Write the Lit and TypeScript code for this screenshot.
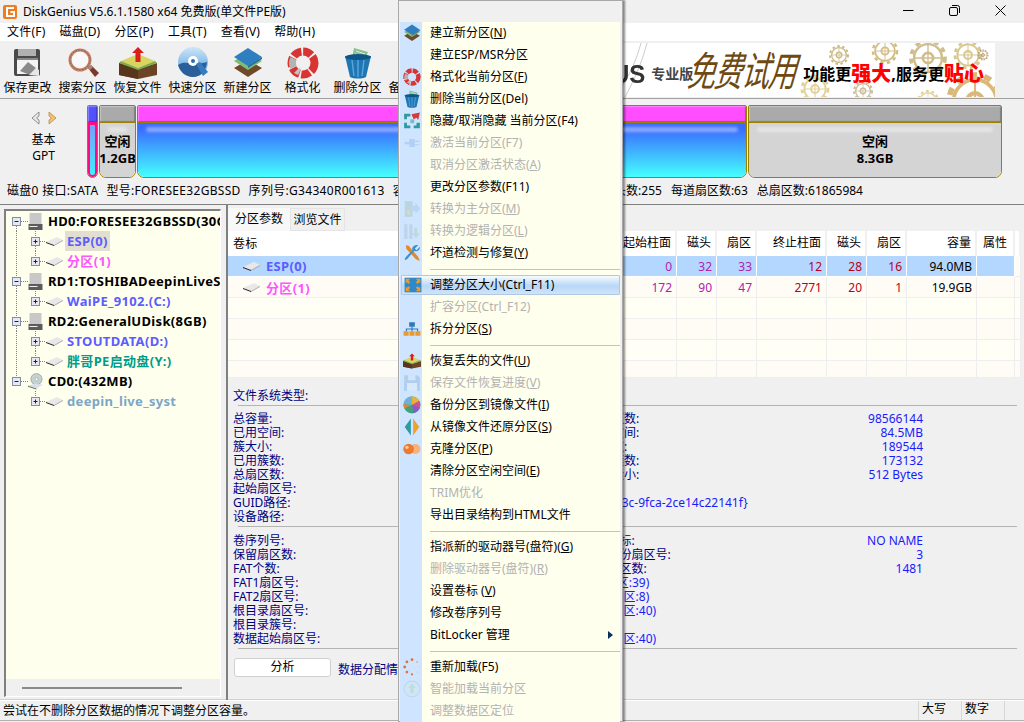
import { LitElement, html, css, svg } from 'lit';
import { customElement } from 'lit/decorators.js';

const ICONS: Record<string, unknown> = {
  save: svg`<rect x="2" y="2" width="26" height="27" rx="2" fill="#4a4a4a"/><rect x="6" y="2" width="18" height="7" fill="#b0b0b0"/><rect x="5" y="11" width="21" height="16" fill="#f4f4f4"/><rect x="5" y="11" width="21" height="2" fill="#888"/><path d="M8 24l8-9 8 6-6 7z" fill="#8a8a8a"/><path d="M17 28l7-7 3 2v6z" fill="#e6e6e6"/>`,
  search: svg`<circle cx="13" cy="13" r="10" fill="#fff" fill-opacity=".5" stroke="#c08268" stroke-width="3"/><circle cx="13" cy="13" r="10" fill="none" stroke="#8f5a44" stroke-width="1" stroke-dasharray="1.5 1.5"/><path d="M21 21l3-3 8 8-4 4z" fill="#7a3a28"/><path d="M21 21l3-3 2 2-3 3z" fill="#a88"/>`,
  recover: svg`<path d="M-3 16L16 22 35 16V28L16 32-3 28z" fill="#6b4426"/><path d="M-3 16L16 22V32L-3 28z" fill="#57361c"/><path d="M-1 14L16 7 33 14 16 21z" fill="#d9d560"/><path d="M-3 16L16 23 35 16 33 14 16 21-1 14z" fill="#7cae4a"/><path d="M16 0l6 6h-3.500v9h-5V6H10z" fill="#d81e1e"/>`,
  quick: svg`<circle cx="16" cy="15" r="15" fill="url(#qk)"/><path d="M1 18c8-6 14 2 29-3-1 9-7 15-14 15C9 30 3 25 1 18z" fill="#2a5f9a"/><circle cx="16" cy="14" r="5" fill="#fff"/><circle cx="16" cy="14" r="2" fill="#2a6fb0"/><path d="M19 17l4-2 8 10-5 4z" fill="#3a7abf"/><defs><linearGradient id="qk" x1="0" y1="0" x2="0" y2="1"><stop offset="0" stop-color="#cfe6f7"/><stop offset="1" stop-color="#4e9ade"/></linearGradient></defs>`,
  new: svg`<path d="M2 21l14-8 14 8-14 9z" fill="#6e4a2a"/><path d="M2 14l14-8 14 8-14 9z" fill="#7fbb74"/><path d="M2 10L16 1l14 9-14 9z" fill="#2f7fc0"/><path d="M16 19l14-9v2l-14 9z" fill="#226aa5"/>`,
  format: svg`<circle cx="16" cy="16" r="11.500" fill="none" stroke="#d83434" stroke-width="8" stroke-dasharray="9 1.800"/><path d="M3.500 22a13.800 13.800 0 0 1 0-12l6 3a7 7 0 0 0 0 6z" fill="#b4b4b4"/><path d="M7 26l5-5 2 1-3 6z" fill="#c4c4c4"/>`,
  del: svg`<path d="M12 1l14 4-4 9-12-2z" fill="#86c08c"/><path d="M14 4l9 3M13 7l8 2" stroke="#dfeedd" stroke-width="1"/><path d="M3 9c8 3 18 3 26 0l-5 21c-4 2-12 2-16 0z" fill="#1f76b4"/><ellipse cx="16" cy="10" rx="13" ry="3" fill="#0f5688"/><path d="M10 13l2 16M16 13v17M22 13l-2 16" stroke="#5aa4d8" stroke-width="1.500"/>`,
  hide: svg`<path d="M2 3h11v5H7v5H2zM2 19h5v5h6v5H2zM19 24h5v-5h6v10H19z" fill="#2f9aa0"/><path d="M13 13h7v7h-7z" fill="#7fb8c8"/><path d="M15 4L30 1l-3 13-3-4-5 3z" fill="#d63a3a"/>`,
  plug: svg`<path d="M3 14h8v4H3zM11 9h10v14H11zM21 12h8v2h-8zM21 18h8v2h-8z" fill="#8fb8e6"/>`,
  primary: svg`<path d="M3 2h14v28H3z" fill="#9ec4b8"/><path d="M17 10h5V5l9 10-9 10v-5h-5z" fill="#9fc7ea"/><path d="M5 22l8-6v12z" fill="#e6c49a"/>`,
  logical: svg`<path d="M2 4h6v26H2zM11 4h6v26h-6z" fill="#a5c2d6"/><path d="M20 10h5v10h5l-7 9-7-9h4z" fill="#a8cdb0"/>`,
  tools: svg`<path d="M5 2l5 1 17 20 3 7-7-3L6 9z" fill="#e08a2a"/><path d="M27 2l-6 6 3 3 6-6c1 6-6 10-10 7L8 26l-4 3-1-3 3-4 11-11c-3-4 3-11 10-9z" fill="#3f8fcf"/>`,
  resize: svg`<rect x="1" y="3" width="30" height="26" fill="#2f88c8"/><path d="M3 5h8l-3 3 3 3-3 3-3-3-2 2zM29 5h-8l3 3-3 3 3 3 3-3 2 2zM3 27h8l-3-3 3-3-3-3-3 3-2-2zM29 27h-8l3-3-3-3 3-3 3 3 2-2z" fill="#ef9a2e"/>`,
  split: svg`<rect x="11" y="4" width="10" height="8" fill="#2f78b8"/><path d="M16 12v4M6 20v-4h20v4M16 16v4" stroke="#2f78b8" stroke-width="2" fill="none"/><rect x="1" y="20" width="9" height="8" fill="#e89a2e"/><rect x="11.500" y="20" width="9" height="8" fill="#e89a2e"/><rect x="22" y="20" width="9" height="8" fill="#e89a2e"/>`,
  floppy: svg`<path d="M2 2h24l4 4v24H2z" fill="#8fb4dc"/><rect x="9" y="2" width="13" height="9" fill="#d8e6f4"/><rect x="7" y="16" width="18" height="14" fill="#e4eef8"/>`,
  pie: svg`<circle cx="16" cy="16" r="15" fill="#3ea27a"/><path d="M16 16V1a15 15 0 0 1 13 8z" fill="#e8b23a"/><path d="M16 16l13-7a15 15 0 0 1 1 12z" fill="#d84a9a"/><path d="M16 16l14 5a15 15 0 0 1-11 9z" fill="#8a5ac8"/><path d="M16 16L2 22A15 15 0 0 1 1 14z" fill="#e8803a"/><path d="M16 16L1 14A15 15 0 0 1 16 1z" fill="#6ab4d8"/>`,
  restore: svg`<path d="M14 1v30L3 16z" fill="#2f9aa0"/><path d="M18 1v30l11-15z" fill="#efa02e"/>`,
  clone: svg`<circle cx="22" cy="16" r="9" fill="#f6b27a"/><circle cx="10" cy="16" r="9.500" fill="#ee7a2e"/><circle cx="7" cy="13" r="3" fill="#fbd0a8"/>`,
  reload: svg`<g fill="#e2703a"><circle cx="16" cy="3" r="2.500"/><circle cx="25" cy="7" r="1.500" fill="#e8a080"/><circle cx="29" cy="16" r="1.200" fill="#f0c0a8"/><circle cx="25" cy="25" r="1.200" fill="#f0c0a8"/><circle cx="16" cy="29" r="2"/><circle cx="7" cy="25" r="2.500"/><circle cx="3" cy="16" r="2.500"/><circle cx="7" cy="7" r="2.500"/></g>`,
  smart: svg`<circle cx="16" cy="16" r="14" fill="#d6e6ee" stroke="#a8c8e0" stroke-width="2"/><path d="M16 6l7 8h-4v9h-6v-9H9z" fill="#a8d8b0"/>`,
};

const icon = (name: string, box = '0 0 32 32') =>
  html`<svg class="ic" viewBox=${box}>${ICONS[name]}</svg>`;

const partIcon = html`<svg class="part" viewBox="0 0 17 9"><path d="M0 5L11 0l6 3-9 5z" fill="#e8e8e8"/><path d="M0 5l8 3v1L0 6z" fill="#222"/><path d="M8 8l9-5v1L8 9z" fill="#aaa"/></svg>`;

const diskIcon = html`<svg class="disk" viewBox="0 0 14 17"><path d="M1 0h12v11H1z" fill="#c8c8c8"/><path d="M0 11h14v6H0z" fill="#5c5c5c"/><path d="M1 13h8v1H1z" fill="#eee"/></svg>`;

const cdIcon = html`<svg class="disk" viewBox="0 0 16 17"><circle cx="9" cy="6" r="6" fill="#c4d2d0" stroke="#7a8a88" stroke-width=".6"/><circle cx="9" cy="6" r="1.600" fill="#fff" stroke="#888" stroke-width=".5"/><path d="M0 13l7-2 9 1-7 4z" fill="#dde"/><path d="M0 13l9 3v1l-9-3z" fill="#4a7a50"/></svg>`;

const gear = (x: number, y: number, r: number, c: string) => svg`
  <circle cx=${x} cy=${y} r=${r} fill="none" stroke=${c} stroke-width=${r * 0.22} stroke-dasharray="${r * 0.28} ${r * 0.28}"/>
  <circle cx=${x} cy=${y} r=${r * 0.82} fill="none" stroke=${c} stroke-width=${r * 0.14}/>
  <circle cx=${x} cy=${y} r=${r * 0.3} fill="none" stroke=${c} stroke-width=${r * 0.16}/>
  <path d="M${x - r * 0.8} ${y}H${x + r * 0.8}M${x} ${y - r * 0.8}V${y + r * 0.8}" stroke=${c} stroke-width=${r * 0.08}/>`;

const TOOLS = [
  ['save', '保存更改'],
  ['search', '搜索分区'],
  ['recover', '恢复文件'],
  ['quick', '快速分区'],
  ['new', '新建分区'],
  ['format', '格式化'],
  ['del', '删除分区'],
  ['floppy', '备份分区'],
];

const MENUS = ['文件(F)', '磁盘(D)', '分区(P)', '工具(T)', '查看(V)', '帮助(H)'];

interface MenuItem { t?: string; i?: string; off?: boolean; sel?: boolean; more?: boolean }

// & marks the accelerator letter
const ITEMS: MenuItem[] = [
  { t: '建立新分区(&N)', i: 'new' },
  { t: '建立ESP/MSR分区' },
  { t: '格式化当前分区(&F)', i: 'format' },
  { t: '删除当前分区(Del)', i: 'del' },
  { t: '隐藏/取消隐藏 当前分区(F4)', i: 'hide' },
  { t: '激活当前分区(F7)', i: 'plug', off: true },
  { t: '取消分区激活状态(&A)', off: true },
  { t: '更改分区参数(F11)' },
  { t: '转换为主分区(&M)', i: 'primary', off: true },
  { t: '转换为逻辑分区(&L)', i: 'logical', off: true },
  { t: '坏道检测与修复(&Y)', i: 'tools' },
  {},
  { t: '调整分区大小(Ctrl_F11)', i: 'resize', sel: true },
  { t: '扩容分区(Ctrl_F12)', off: true },
  { t: '拆分分区(&S)', i: 'split' },
  {},
  { t: '恢复丢失的文件(&U)', i: 'recover' },
  { t: '保存文件恢复进度(&V)', i: 'floppy', off: true },
  { t: '备份分区到镜像文件(&I)', i: 'pie' },
  { t: '从镜像文件还原分区(&S)', i: 'restore' },
  { t: '克隆分区(&P)', i: 'clone' },
  { t: '清除分区空闲空间(&E)' },
  { t: 'TRIM优化', off: true },
  { t: '导出目录结构到HTML文件' },
  {},
  { t: '指派新的驱动器号(盘符)(&G)' },
  { t: '删除驱动器号(盘符)(&R)', off: true },
  { t: '设置卷标 (&V)' },
  { t: '修改卷序列号' },
  { t: 'BitLocker 管理', more: true },
  {},
  { t: '重新加载(F5)', i: 'reload' },
  { t: '智能加载当前分区', i: 'smart', off: true },
  { t: '调整数据区定位', off: true },
];

const TREE = [
  { root: true, disk: 'hd', t: 'HD0:FORESEE32GBSSD(30GB)' },
  { t: 'ESP(0)', c: '#5c5cff', sel: true, more: true },
  { t: '分区(1)', c: '#ff55ff' },
  { root: true, disk: 'hd', t: 'RD1:TOSHIBADeepinLiveSystem(16GB)' },
  { t: 'WaiPE_9102.(C:)', c: '#5c5cff' },
  { root: true, disk: 'hd', t: 'RD2:GeneralUDisk(8GB)' },
  { t: 'STOUTDATA(D:)', c: '#5c5cff', more: true },
  { t: '胖哥PE启动盘(Y:)', c: '#009c8c' },
  { root: true, disk: 'cd', t: 'CD0:(432MB)', last: true },
  { t: 'deepin_live_syst', c: '#7ba6c6', last: true },
];

const COLS = ['起始柱面', '磁头', '扇区', '终止柱面', '磁头', '扇区', '容量', '属性'];
const ROWS = [
  { icon: true, name: 'ESP(0)', c: '#5c5cff', sel: true, v: ['0', '32', '33', '12', '28', '16', '94.0MB', ''] },
  { icon: true, name: '分区(1)', c: '#ff55ff', v: ['172', '90', '47', '2771', '20', '1', '19.9GB', ''] },
  { v: [] }, { v: [] }, { v: [] }, { v: [] },
];

const colClass = (i: number) => (i < 3 ? 'start' : i < 6 ? 'end' : '');

type Info = [string, string?, string?, string?];
const SEC1: Info[] = [
  ['总容量:', undefined, '总扇区数:', '98566144'],
  ['已用空间:', undefined, '空闲空间:', '84.5MB'],
  ['簇大小:', undefined, '总簇数:', '189544'],
  ['已用簇数:', undefined, '空闲簇数:', '173132'],
  ['总扇区数:', undefined, '扇区大小:', '512 Bytes'],
  ['起始扇区号:', '206848'],
  ['GUID路径:', '{5d3c9a70-2f1e-4a3c-9fca-2ce14c22141f}'],
  ['设备路径:', '\\Device\\Harddisk2'],
];
const SEC2: Info[] = [
  ['卷序列号:', undefined, 'FAT卷标:', 'NO NAME'],
  ['保留扇区数:', undefined, 'FAT备份扇区号:', '3'],
  ['FAT个数:', undefined, 'FAT扇区数:', '1481'],
  ['FAT1扇区号:', '34 (柱面:0 磁头:33 扇区:39)'],
  ['FAT2扇区号:', '515 (柱面:0 磁头:89 扇区:8)'],
  ['根目录扇区号:', '996 (柱面:0 磁头:15 扇区:40)'],
  ['根目录簇号:', '2'],
  ['数据起始扇区号:', '996 (柱面:0 磁头:15 扇区:40)'],
];

@customElement('app-root')
export class AppRoot extends LitElement {
  static styles = css`
    :host {
      display: block;
      position: relative;
      width: 1024px;
      height: 722px;
      overflow: hidden;
      background: #f0f0f0;
      color: #000;
      font: 12px/16px "Noto Sans", "Noto Sans CJK SC", sans-serif;
    }
    .ic { width: 32px; height: 32px; overflow: visible; display: block; }

    .title { display: flex; align-items: center; height: 23px; padding-left: 3px; gap: 6px; }
    .title .logo { width: 14px; height: 14px; }
    .title .name { flex: 1; }
    .win { display: flex; padding-right: 18px; gap: 35px; margin-top: -2px; }
    .win svg { width: 11px; height: 11px; display: block; }

    .menubar { display: flex; height: 18px; background: #fff; align-items: center; padding-left: 7px; gap: 14px; letter-spacing: .2px; }

    .toolbar { display: flex; height: 57px; border-bottom: 1px solid #a0a0a0; position: relative; }
    .tool { width: 55px; flex: none; display: flex; flex-direction: column; align-items: center; padding-top: 6px; }
    .tool span { margin-top: 1px; white-space: nowrap; }
    .banner {
      position: absolute;
      left: 623px;
      top: 2px;
      width: 372px;
      height: 54px;
      box-sizing: border-box;
      padding-top: 7px;
      background: #fff;
      display: flex;
      align-items: center;
      overflow: hidden;
      font-weight: 700;
      white-space: nowrap;
    }
    .banner .bg { position: absolute; inset: 0; width: 100%; height: 100%; }
    .banner > span { position: relative; }
    .us { font: 700 24px "Liberation Sans", sans-serif; color: #333; margin-left: -11px; transform: scaleY(1.1); }
    .pro { font-size: 14px; color: #444; margin-left: 6px; width: 44px; }
    .free {
      font-size: 28px;
      font-weight: 400;
      color: #6e4a12;
      width: 107px;
      margin: -7px 0 0 -4px;
      letter-spacing: -1px;
      transform: skewX(-16deg) scaleY(1.45);
    }
    .slogan { font-size: 16px; display: flex; align-items: center; margin-left: 5px; }
    .slogan b { color: #f00; font-size: 20px; }

    .diskbar { display: flex; height: 81px; }
    .nav { width: 87px; flex: none; display: flex; flex-direction: column; align-items: center; padding-top: 12px; }
    .nav svg { width: 26px; height: 14px; margin-bottom: 7px; }
    .segs { display: flex; padding-top: 6px; gap: 1px; height: 72px; }
    .seg {
      display: flex;
      flex-direction: column;
      box-sizing: border-box;
      height: 73px;
      border: 1px solid #9a8000;
      border-radius: 2px 2px 7px 7px;
      overflow: hidden;
      font-weight: 700;
      font-size: 13px;
    }
    .seg .top { height: 16px; flex: none; border-bottom: 1px solid #9a8000; box-shadow: inset -1px -1px 1px rgba(0,0,0,.25), inset 1px 1px 1px rgba(255,255,255,.3); }
    .seg .low { flex: 1; position: relative; display: flex; flex-direction: column; align-items: center; justify-content: center; line-height: 17px; white-space: nowrap; }
    .seg .low::before { content: ''; position: absolute; left: 8px; right: 8px; top: 4px; height: 5px; background: rgba(255,255,255,.4); border-radius: 3px; filter: blur(1.5px); }
    .seg.free1 .low, .seg.free2 .low { background: #d4d4d4; }
    .seg.free1 .top, .seg.free2 .top { background: #aaa; }
    .seg.esp { width: 11px; }
    .seg.esp .top { background: #5252ff; }
    .seg.esp .low { border: 3px solid #ff0a80; border-radius: 0 0 5px 5px; background: linear-gradient(#7a9dfa, #3cf0ff); margin: -1px; }
    .seg.esp .low::before { display: none; }
    .seg.free1 { width: 37px; }
    .seg.wide { width: 610px; }
    .seg.wide .top { background: #ff4dff; }
    .seg.wide .low { background: linear-gradient(#3a6cff 10%, #45ffff); }
    .seg.free2 { width: 254px; }

    .info { display: flex; justify-content: space-between; height: 25px; padding: 3px 161px 0 7px; white-space: nowrap; box-sizing: border-box; border-bottom: 1px solid #808080; }
    .info div { display: flex; gap: 8px; }
    .info .disk-id { letter-spacing: .3px; }
    .info .geom { gap: 9px; }

    .content { display: flex; height: 495px; }
    .tree {
      width: 217px;
      margin: 4px 0 3px 4px;
      box-sizing: border-box;
      border: 1px solid #fff;
      border-top: 2px solid #808080;
      border-left: 2px solid #808080;
      background: #ffffee;
      display: flex;
      flex-direction: column;
      overflow: hidden;
      flex: none;
    }
    .nodes { flex: 1; overflow: hidden; }
    .node { display: flex; align-items: center; height: 20px; white-space: nowrap; letter-spacing: .33px; font: 700 13px/20px "Noto Sans", "Noto Sans CJK SC", sans-serif; }
    .node .g { flex: none; height: 20px; display: block; }
    .part { width: 17px; height: 9px; flex: none; }
    .disk { width: 15px; height: 17px; flex: none; margin-right: 5px; }
    .node .lbl { padding: 0 2px; margin-left: 2px; }
    .node.root .lbl { margin-left: 0; padding: 0; }
    .node .lbl.sel { background: #e2dfd0; }
    .hbar { height: 17px; flex: none; background: #f0f0f0; display: flex; align-items: center; padding-left: 16px; }
    .hbar i { display: block; width: 160px; height: 2px; background: #8a8a8a; }

    .pane { flex: 1; margin-left: 5px; border-left: 2px solid #808080; display: flex; flex-direction: column; min-width: 0; }
    .tabs { display: flex; height: 26px; padding-top: 3px; box-sizing: border-box; }
    .tab { width: 62px; text-align: center; background: #f8f8f8; line-height: 22px; }
    .tab.off { width: 55px; background: #f0f0f0; border: 1px solid #e4e4e4; box-sizing: border-box; }
    .grid { display: grid; grid-template-columns: 389px 60px 40px 40px 70px 40px 40px 70px 38px 6px; }
    .grid > div { height: 21px; line-height: 21px; box-sizing: border-box; text-align: right; padding-right: 4px; border-right: 1px solid #eee; border-bottom: 1px solid #eee; white-space: nowrap; overflow: hidden; }
    .grid > div.first { text-align: left; border-right: 0; display: flex; align-items: center; padding-left: 15px; font: 700 13px "Noto Sans", "Noto Sans CJK SC", sans-serif; gap: 6px; letter-spacing: .33px; }
    .grid > .h { height: 25px; line-height: 24px; background: #fff; border: 0; border-right: 2px solid #f0f0f0; }
    .grid > .h.first { padding-left: 5px; font: 12px/24px "Noto Sans", "Noto Sans CJK SC", sans-serif; border: 0; }
    .grid > .h.attr { text-align: center; padding: 0; }
    .grid > .odd { background: #fffcf6; }
    .grid > .even { background: #fffff6; }
    .grid > .sel { background: #b3d7ff; border-color: #fff; }
    .grid > .last5 { height: 17px; }
    .start { color: #b020b0; }
    .end { color: #b80020; }

    .details { flex: 1; padding: 11px 5px 0 5px; color: #000080; }
    .sec { display: grid; grid-template-columns: 270px 85px 120px 215px; }
    .sec > * { height: 14px; line-height: 14px; white-space: nowrap; }
    .sec .lv { grid-column: 2 / 5; color: #1a1aff; }
    .sec .lv.guid { padding-left: 14px; }
    .sec .rv { color: #1a1aff; text-align: right; }
    .sep { height: 1px; background: #b4b4b4; margin: 2px 2px 6px 5px; width: 779px; }
    .sep.mid { margin-bottom: 7px; }
    .actions { display: flex; align-items: flex-end; margin-top: 9px; }
    .btn { width: 97px; height: 19px; box-sizing: border-box; border: 1px solid #d0d0d0; border-radius: 3px; background: #fff; text-align: center; color: #000; line-height: 16px; margin-left: 1px; }
    .actions span { margin-left: 7px; margin-bottom: -1px; white-space: nowrap; }

    .status { display: flex; height: 21px; border-top: 1px solid #fff; box-shadow: 0 -1px 0 #d0d0d0; border-bottom: 1px solid #b0b0b0; box-sizing: border-box; align-items: center; padding-left: 3px; }
    .status .msg { flex: 1; }
    .status .cell { width: 43px; height: 100%; box-sizing: border-box; border-left: 1px solid #d8d8d8; padding-left: 3px; }
    .status .tail { width: 20px; border-left: 1px solid #d8d8d8; }

    .popup {
      position: absolute;
      left: 398px;
      top: 0;
      width: 225px;
      height: 722px;
      box-sizing: border-box;
      background: #f0f0f0;
      border: 1px solid #a8a8a8;
      box-shadow: 2px 0 2px rgba(0,0,0,.45);
      padding: 21px 2px 0 1px;
    }
    .list { background: linear-gradient(90deg, #cfe5ff 22px, #ffffee 22px); height: 700px; overflow: hidden; }
    .item { display: flex; align-items: center; height: 22px; box-sizing: border-box; white-space: pre; position: relative; }
    .item .ic { width: 18px; height: 18px; margin-left: 3px; flex: none; }
    .item .gap { width: 21px; flex: none; }
    .item .txt { margin-left: 9px; }
    .item.off .txt { color: #b2b2b2; }
    .item.off .ic { opacity: .45; }
    .item.sel { background: linear-gradient(#f6fafe, #b8d8f8 55%, #cfe3f8); border: 1px solid #b0c8e0; height: 20px; margin: 1px 0 1px 1px; border-radius: 1px; }
    .item.sel .ic { margin-left: 2px; }
    .item.sel .txt { margin-left: 8px; }
    .rule { height: 10px; display: flex; align-items: center; padding-left: 30px; }
    .rule i { display: block; height: 1px; background: #c4c4bc; width: 100%; }
    .arrow { position: absolute; left: 208px; top: 7px; border-left: 5px solid #0a3060; border-top: 4px solid transparent; border-bottom: 4px solid transparent; }
  `;

  renderGutter(n: (typeof TREE)[number], i: number) {
    if (n.root) {
      return html`<svg class="g" width="22" height="20" viewBox="0 0 22 20">
        <g stroke="#808080" stroke-dasharray="1 1" fill="none">
          <path d="M10.500 0V6" opacity=${i === 0 ? 0 : 1}/>
          <path d="M15 10.500H22"/>
          ${n.last ? '' : svg`<path d="M10.500 15V20"/>`}
        </g>
        <rect x="6.500" y="6.500" width="8" height="8" fill="#e8e8f4" stroke="#7f8fa8"/>
        <path d="M8.500 10.500h4" stroke="#222"/>
      </svg>`;
    }
    const next = TREE[i + 1];
    return html`<svg class="g" width="40" height="20" viewBox="0 0 40 20">
      <g stroke="#808080" stroke-dasharray="1 1" fill="none">
        ${n.last ? '' : svg`<path d="M10.500 0V20"/>`}
        <path d="M29.500 0V6"/>
        ${next && !next.root ? svg`<path d="M29.500 15V20"/>` : ''}
        <path d="M34 10.500H39"/>
      </g>
      <rect x="25.500" y="6.500" width="8" height="8" fill="#e8e8f4" stroke="#7f8fa8"/>
      <path d="M27.500 10.500h4M29.500 8.500v4" stroke="#222"/>
    </svg>`;
  }

  renderItem(m: MenuItem) {
    if (!m.t) return html`<div class="rule"><i></i></div>`;
    const [a, b] = m.t.split('&');
    return html`<div class="item ${m.off ? 'off' : ''} ${m.sel ? 'sel' : ''}">
      ${m.i ? icon(m.i, m.i === 'recover' ? '-3 0 38 32' : undefined) : html`<span class="gap"></span>`}
      <span class="txt">${a}${b ? html`<u>${b[0]}</u>${b.slice(1)}` : ''}</span>
      ${m.more ? html`<span class="arrow"></span>` : ''}
    </div>`;
  }

  renderSec(rows: Info[]) {
    return html`<div class="sec">
      ${rows.map(([l, lv, rl, rv]) => html`
        <div>${l}</div>
        ${lv
          ? html`<div class="lv ${lv[0] === '{' ? 'guid' : ''}">${lv}</div>`
          : html`<div></div><div>${rl ?? ''}</div><div class="rv">${rv ?? ''}</div>`}
      `)}
    </div>`;
  }

  render() {
    return html`
      <div class="title">
        <svg class="logo" viewBox="0 0 14 14">
          <rect width="14" height="14" rx="2" fill="#ee7d22"/>
          <path d="M11 3H4v8h7V7H7.500" fill="none" stroke="#fff" stroke-width="2"/>
        </svg>
        <span class="name">DiskGenius V5.6.1.1580 x64 免费版(单文件PE版)</span>
        <div class="win">
          <svg viewBox="0 0 11 11"><path d="M0 5.500h10.500" stroke="#000"/></svg>
          <svg viewBox="0 0 11 11"><rect x=".5" y="2.500" width="8" height="8" rx="1.500" fill="none" stroke="#000"/><path d="M3 .5h5.500a2 2 0 0 1 2 2V8" fill="none" stroke="#000"/></svg>
          <svg viewBox="0 0 11 11"><path d="M.5.5l10 10M10.500.5l-10 10" stroke="#000"/></svg>
        </div>
      </div>

      <div class="menubar">${MENUS.map((m) => html`<span>${m}</span>`)}</div>

      <div class="toolbar">
        ${TOOLS.map(([i, t]) => html`<div class="tool">${icon(i)}<span>${t}</span></div>`)}
        <div class="banner">
          <svg class="bg" viewBox="0 0 372 54">
            <path d="M-5 50C8 30 14 15 18 0M2 54C14 32 20 15 24 0" fill="none" stroke="#ccc"/>
            ${gear(216, 12, 9, '#cdbb86')}
            ${gear(192, 46, 13, '#e2d29a')}
            ${gear(240, 48, 9, '#cdbb9a')}
            ${gear(262, 8, 12, '#d2bd84')}
            ${gear(305, 15, 17, '#cfbd8c')}
            ${gear(345, 12, 13, '#d8c890')}
            ${gear(360, 12, 5, '#b49a70')}
            ${gear(352, 58, 26, '#d9b87a')}
            ${gear(305, 58, 10, '#e2d29a')}
          </svg>
          <span class="us">US</span>
          <span class="pro">专业版</span>
          <span class="free">免费试用</span>
          <span class="slogan">功能更<b>强大</b>,服务更<b>贴心</b></span>
        </div>
      </div>

      <div class="diskbar">
        <div class="nav">
          <svg viewBox="0 0 26 14">
            <path d="M8 1L1 7l7 6V9L5.500 7 8 5z" fill="#e8e8e8" stroke="#777" stroke-width=".8"/>
            <path d="M18 1l7 6-7 6V9l2.500-2L18 5z" fill="#f6c27a" stroke="#b88a40" stroke-width=".8"/>
          </svg>
          <span>基本</span>
          <span>GPT</span>
        </div>
        <div class="segs">
          <div class="seg esp"><div class="top"></div><div class="low"></div></div>
          <div class="seg free1"><div class="top"></div><div class="low"><span>空闲</span><span>1.2GB</span></div></div>
          <div class="seg wide"><div class="top"></div><div class="low"></div></div>
          <div class="seg free2"><div class="top"></div><div class="low"><span>空闲</span><span>8.3GB</span></div></div>
        </div>
      </div>

      <div class="info">
        <div class="disk-id">
          <span>磁盘0 接口:SATA</span>
          <span>型号:FORESEE32GBSSD</span>
          <span>序列号:G34340R001613</span>
          <span>容量:29.5GB(30208MB)</span>
        </div>
        <div class="geom">
          <span>磁头数:255</span>
          <span>每道扇区数:63</span>
          <span>总扇区数:61865984</span>
        </div>
      </div>

      <div class="content">
        <div class="tree">
          <div class="nodes">
            ${TREE.map((n, i) => html`<div class="node ${n.root ? 'root' : ''}">
              ${this.renderGutter(n, i)}
              ${n.root ? (n.disk === 'cd' ? cdIcon : diskIcon) : partIcon}
              <span class="lbl ${n.sel ? 'sel' : ''}" style=${n.c ? `color:${n.c}` : ''}>${n.t}</span>
            </div>`)}
          </div>
          <div class="hbar"><i></i></div>
        </div>

        <div class="pane">
          <div class="tabs">
            <div class="tab">分区参数</div>
            <div class="tab off">浏览文件</div>
          </div>
          <div class="grid">
            <div class="h first">卷标</div>
            ${COLS.map((c, i) => html`<div class="h ${i === 7 ? 'attr' : ''}">${c}</div>`)}
            <div class="h"></div>
            ${ROWS.map((r, ri) => {
              const tone = r.sel ? 'sel' : ri % 2 ? 'odd' : 'even';
              const tail = ri === 5 ? 'last5' : '';
              return html`
                <div class="first ${tone} ${tail}">
                  ${r.icon ? partIcon : ''}
                  ${r.name ? html`<span style="color:${r.c}">${r.name}</span>` : ''}
                </div>
                ${COLS.map((_, i) => html`<div class="${tone} ${tail} ${colClass(i)}">${r.v[i] ?? ''}</div>`)}
                <div class="${ri === 0 ? 'odd' : tone} ${tail}"></div>
              `;
            })}
          </div>
          <div class="details">
            <div class="sec"><div>文件系统类型:</div></div>
            <div class="sep"></div>
            ${this.renderSec(SEC1)}
            <div class="sep mid"></div>
            ${this.renderSec(SEC2)}
            <div class="sep"></div>
            <div class="actions">
              <div class="btn">分析</div>
              <span>数据分配情况图:</span>
            </div>
          </div>
        </div>
      </div>

      <div class="status">
        <span class="msg">尝试在不删除分区数据的情况下调整分区容量。</span>
        <span class="cell">大写</span>
        <span class="cell">数字</span>
        <span class="cell tail"></span>
      </div>

      <div class="popup">
        <div class="list">${ITEMS.map((m) => this.renderItem(m))}</div>
      </div>
    `;
  }
}
